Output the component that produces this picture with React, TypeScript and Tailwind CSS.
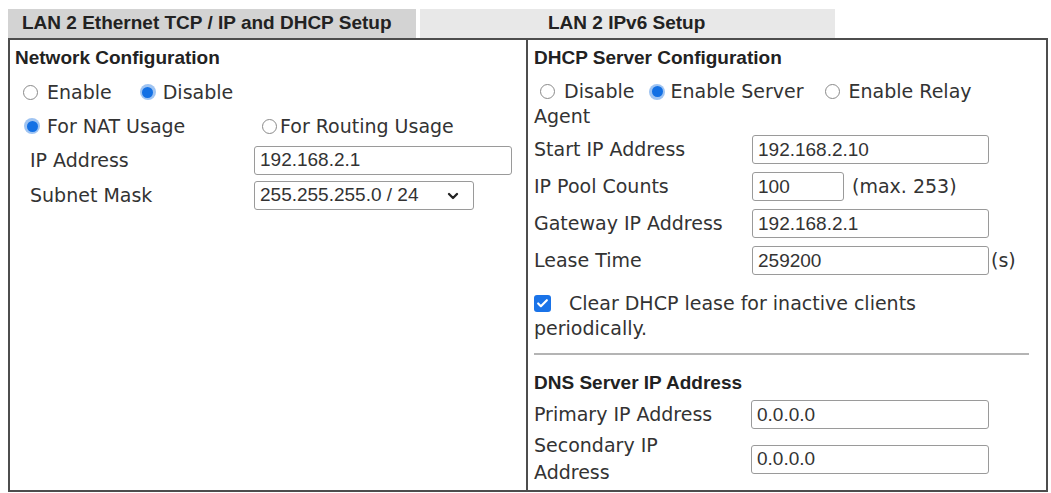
import React from 'react';
import { Check, ChevronDown } from 'lucide-react';

const label = "font-['DejaVu_Sans',Verdana,sans-serif] text-[19px] text-[#333]";
const heading = "font-['Liberation_Sans',Arial,sans-serif] font-bold text-[19px] text-[#222]";
const field =
  "h-[29px] border-[1.5px] border-[#9a9a9a] rounded-[3px] bg-white pl-[5px] font-['Liberation_Sans',Arial,sans-serif] text-[19px] text-[#333] outline-none";

function Radio({ checked, text, gap }: { checked?: boolean; text: string; gap: string }) {
  return (
    <span className="flex items-center">
      {checked ? (
        <span className="w-[16px] h-[16px] rounded-full bg-[#9fc4f2] flex items-center justify-center shrink-0">
          <span className="w-[11px] h-[11px] rounded-full bg-[#1370e4]" />
        </span>
      ) : (
        <span className="w-[15px] h-[15px] rounded-full border border-[#8a8a8a] bg-white shrink-0" />
      )}
      <span className={`${label} ${gap} leading-none`}>{text}</span>
    </span>
  );
}

function Field({ value, width }: { value: string; width: string }) {
  return <input readOnly value={value} className={`${field} ${width}`} />;
}

export default function App() {
  return (
    <div className="w-[1051px] h-[493px] bg-white pl-[8px] pt-[9px]">
      {/* Tabs */}
      <div className="flex h-[29px]">
        <div className={`w-[408px] bg-[#d3d3d3] pl-[14px] flex items-center ${heading} text-[#1e1e1e]`}>
          LAN 2 Ethernet TCP / IP and DHCP Setup
        </div>
        <div className={`ml-[4px] w-[415px] bg-[#e8e8e8] pl-[128px] flex items-center ${heading} text-[#1e1e1e]`}>
          LAN 2 IPv6 Setup
        </div>
      </div>

      {/* Setup table */}
      <div className="w-[1040px] border-2 border-[#4d4d4d] flex">
        {/* Network configuration */}
        <div className="w-[518px] border-r-2 border-[#4d4d4d]">
          <div className={`h-[36px] flex items-center pl-[5px] ${heading}`}>Network Configuration</div>
          <div className="h-[32px] flex items-center pl-[13px]">
            <Radio text="Enable" gap="ml-[9px]" />
            <span className="ml-[28px]">
              <Radio checked text="Disable" gap="ml-[7px]" />
            </span>
          </div>
          <div className="h-[36px] flex items-center pl-[14px]">
            <span className="w-[238px]">
              <Radio checked text="For NAT Usage" gap="ml-[7px]" />
            </span>
            <Radio text="For Routing Usage" gap="ml-[3px]" />
          </div>
          <div className="h-[32px] flex items-center pl-[20px]">
            <span className={`${label} w-[224px]`}>IP Address</span>
            <Field value="192.168.2.1" width="w-[258px]" />
          </div>
          <div className="h-[39px] flex items-center pl-[20px]">
            <span className={`${label} w-[224px]`}>Subnet Mask</span>
            <div className={`${field} w-[220px] h-[27px] flex items-center justify-between pr-[12px]`}>
              <span>255.255.255.0 / 24</span>
              <ChevronDown size={16} strokeWidth={3.5} className="text-[#222]" />
            </div>
          </div>
        </div>

        {/* DHCP server configuration */}
        <div className="flex-1 pl-[6px] pb-[3px]">
          <div className={`h-[36px] flex items-center ${heading}`}>DHCP Server Configuration</div>
          <div className="mt-[3px] h-[25px] flex items-center pl-[6px]">
            <Radio text="Disable" gap="ml-[9px]" />
            <span className="ml-[15px]">
              <Radio checked text="Enable Server" gap="ml-[5px]" />
            </span>
            <span className="ml-[21px]">
              <Radio text="Enable Relay" gap="ml-[9px]" />
            </span>
          </div>
          <div className={`h-[25px] flex items-center ${label}`}>Agent</div>

          <div className="mt-[2px] h-[37px] flex items-center">
            <span className={`${label} w-[218px]`}>Start IP Address</span>
            <Field value="192.168.2.10" width="w-[237px]" />
          </div>
          <div className="h-[37px] flex items-center">
            <span className={`${label} w-[218px]`}>IP Pool Counts</span>
            <Field value="100" width="w-[92px]" />
            <span className={`${label} ml-[8px]`}>(max. 253)</span>
          </div>
          <div className="h-[37px] flex items-center">
            <span className={`${label} w-[218px]`}>Gateway IP Address</span>
            <Field value="192.168.2.1" width="w-[237px]" />
          </div>
          <div className="h-[37px] flex items-center">
            <span className={`${label} w-[218px]`}>Lease Time</span>
            <Field value="259200" width="w-[237px]" />
            <span className={`${label} ml-[2px]`}>(s)</span>
          </div>

          <div className="mt-[12px] h-[25px] flex items-center">
            <span className="w-[17px] h-[17px] rounded-[3px] bg-[#1a73e8] flex items-center justify-center shrink-0">
              <Check size={13} strokeWidth={4} className="text-white" />
            </span>
            <span className={`${label} ml-[18px]`}>Clear DHCP lease for inactive clients</span>
          </div>
          <div className={`h-[25px] flex items-center ${label}`}>periodically.</div>

          <div className="mt-[12px] mr-[17px] h-[2px] bg-[#b4b4b4]" />

          <div className={`mt-[13px] h-[30px] flex items-center ${heading}`}>DNS Server IP Address</div>
          <div className="h-[33px] flex items-center">
            <span className={`${label} w-[217px]`}>Primary IP Address</span>
            <Field value="0.0.0.0" width="w-[238px]" />
          </div>
          <div className="h-[56px] flex items-center">
            <span className={`${label} w-[217px] leading-[27px]`}>
              Secondary IP
              <br />
              Address
            </span>
            <Field value="0.0.0.0" width="w-[238px]" />
          </div>
        </div>
      </div>
    </div>
  );
}
